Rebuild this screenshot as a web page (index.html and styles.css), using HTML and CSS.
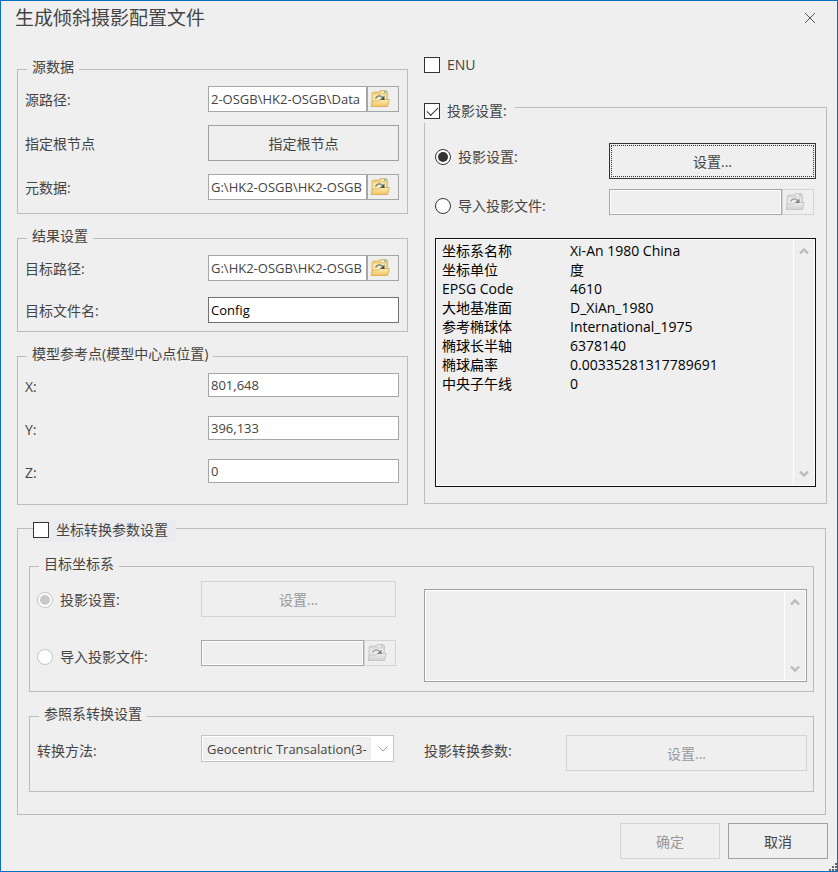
FILE: index.html
```html
<!DOCTYPE html>
<html lang="zh-CN">
<head>
<meta charset="utf-8">
<title>生成倾斜摄影配置文件</title>
<link rel="stylesheet" href="styles.css">
</head>
<body>
<svg class="defs" width="0" height="0" aria-hidden="true">
  <defs>
    <linearGradient id="folder-front" x1="0" y1="0" x2="0" y2="1">
      <stop offset="0" stop-color="#fdeeb2"/>
      <stop offset="1" stop-color="#edc364"/>
    </linearGradient>
    <symbol id="icon-folder" viewBox="0 0 20 18">
      <path d="M2 15V3.500L3 2h6l1-1.500h6.500L17.500 2v13z" fill="#efcd78" stroke="#dcb35c" stroke-width="0.800"/>
      <path d="M3 12V4.500h13V12z" fill="#fbe9ab"/>
      <path d="M11 1.500h5v1.300h-5z" fill="#f4fbff"/>
      <path d="M14 1.300h2v1.500h-2z" fill="#3fc3e8"/>
      <path d="M1 16.500L2.500 11h6.500L10.500 9.500h8.800L17.500 16.500z" fill="url(#folder-front)" stroke="#dba94a" stroke-width="0.800"/>
      <path d="M5.500 8.500C7 5.500 10.500 5 12.500 7.500" fill="none" stroke="#5d7585" stroke-width="1.300"/>
      <path d="M14.500 5.500v4.500H10z" fill="#3d5568"/>
    </symbol>
    <symbol id="icon-up" viewBox="0 0 10 8"><path d="M1 6.500L5 2.500L9 6.500" fill="none" stroke="#bbb" stroke-width="2.400"/></symbol>
    <symbol id="icon-down" viewBox="0 0 10 8"><path d="M1 1.500L5 5.500L9 1.500" fill="none" stroke="#bbb" stroke-width="2.400"/></symbol>
  </defs>
</svg>
<form class="dialog">
  <header class="titlebar">
    <h1>生成倾斜摄影配置文件</h1>
    <button type="button" class="close" aria-label="关闭"><svg width="12" height="12" viewBox="0 0 12 12"><path d="M1 1L11 11M11 1L1 11" stroke="#555" fill="none"/></svg></button>
  </header>

  <main class="content">
    <div class="columns">
      <div class="stack">
        <fieldset class="group source">
          <legend>源数据</legend>
          <div class="row">
            <label for="src">源路径:</label>
            <div class="path"><input id="src" type="text" value="2-OSGB\HK2-OSGB\Data"><button type="button" class="browse" aria-label="浏览"><svg width="20" height="18"><use href="#icon-folder"/></svg></button></div>
          </div>
          <div class="row">
            <label for="root">指定根节点</label>
            <button type="button" id="root" class="btn">指定根节点</button>
          </div>
          <div class="row">
            <label for="meta">元数据:</label>
            <div class="path"><input id="meta" type="text" value="G:\HK2-OSGB\HK2-OSGB"><button type="button" class="browse" aria-label="浏览"><svg width="20" height="18"><use href="#icon-folder"/></svg></button></div>
          </div>
        </fieldset>

        <fieldset class="group result">
          <legend>结果设置</legend>
          <div class="row">
            <label for="dest">目标路径:</label>
            <div class="path"><input id="dest" type="text" value="G:\HK2-OSGB\HK2-OSGB"><button type="button" class="browse" aria-label="浏览"><svg width="20" height="18"><use href="#icon-folder"/></svg></button></div>
          </div>
          <div class="row">
            <label for="name">目标文件名:</label>
            <input id="name" class="strong" type="text" value="Config">
          </div>
        </fieldset>

        <fieldset class="group origin">
          <legend>模型参考点(模型中心点位置)</legend>
          <div class="row"><label for="x">X:</label><input id="x" class="number" type="text" value="801,648"></div>
          <div class="row"><label for="y">Y:</label><input id="y" class="number" type="text" value="396,133"></div>
          <div class="row"><label for="z">Z:</label><input id="z" class="number" type="text" value="0"></div>
        </fieldset>
      </div>

      <div class="right">
        <label class="choice enu"><input type="checkbox">ENU</label>
        <fieldset class="group projection">
          <legend><label class="choice"><input type="checkbox" checked>投影设置:</label></legend>
          <div class="options">
            <div class="radios">
              <label class="choice"><input type="radio" name="proj" checked>投影设置:</label>
              <label class="choice"><input type="radio" name="proj">导入投影文件:</label>
            </div>
            <div class="controls">
              <button type="button" class="btn focused">设置...</button>
              <div class="path"><input type="text" aria-label="投影文件" disabled><button type="button" class="browse" aria-label="浏览" disabled><svg width="20" height="18"><use href="#icon-folder"/></svg></button></div>
            </div>
          </div>
          <div class="listbox dark">
            <table>
              <tr><th scope="row">坐标系名称</th><td>Xi-An 1980 China</td></tr>
              <tr><th scope="row">坐标单位</th><td>度</td></tr>
              <tr><th scope="row">EPSG Code</th><td>4610</td></tr>
              <tr><th scope="row">大地基准面</th><td>D_XiAn_1980</td></tr>
              <tr><th scope="row">参考椭球体</th><td>International_1975</td></tr>
              <tr><th scope="row">椭球长半轴</th><td>6378140</td></tr>
              <tr><th scope="row">椭球扁率</th><td>0.00335281317789691</td></tr>
              <tr><th scope="row">中央子午线</th><td>0</td></tr>
            </table>
            <div class="scroll"><svg width="10" height="8"><use href="#icon-up"/></svg><svg width="10" height="8"><use href="#icon-down"/></svg></div>
          </div>
        </fieldset>
      </div>
    </div>

    <fieldset class="group transform">
      <legend><label class="choice highlight"><input type="checkbox">坐标转换参数设置</label></legend>
      <fieldset class="group target">
        <legend>目标坐标系</legend>
        <div class="radios">
          <label class="choice"><input type="radio" name="target" checked disabled>投影设置:</label>
          <label class="choice"><input type="radio" name="target" disabled>导入投影文件:</label>
        </div>
        <div class="controls">
          <button type="button" class="btn" disabled>设置...</button>
          <div class="path"><input type="text" aria-label="投影文件" disabled><button type="button" class="browse" aria-label="浏览" disabled><svg width="20" height="18"><use href="#icon-folder"/></svg></button></div>
        </div>
        <div class="listbox">
          <div class="scroll"><svg width="10" height="8"><use href="#icon-up"/></svg><svg width="10" height="8"><use href="#icon-down"/></svg></div>
        </div>
      </fieldset>
      <fieldset class="group method">
        <legend>参照系转换设置</legend>
        <label for="method">转换方法:</label>
        <div class="combo">
          <select id="method" disabled><option>Geocentric Transalation(3-</option></select>
          <svg width="10" height="6" viewBox="0 0 10 6"><path d="M0.500 0.500L5 5L9.500 0.500" fill="none" stroke="#a0a0a0"/></svg>
        </div>
        <label for="params">投影转换参数:</label>
        <button type="button" id="params" class="btn" disabled>设置...</button>
      </fieldset>
    </fieldset>
  </main>

  <footer class="actions">
    <button type="submit" class="btn" disabled>确定</button>
    <button type="button" class="btn">取消</button>
  </footer>
  <svg class="grip" width="8" height="8" viewBox="0 0 8 8" aria-hidden="true"><path d="M6 0h2v2h-2zM3 3h2v2h-2zM6 3h2v2h-2zM0 6h2v2h-2zM3 6h2v2h-2zM6 6h2v2h-2z" fill="#666"/></svg>
</form>
</body>
</html>
```
FILE: styles.css
```css
* {
  box-sizing: border-box;
}

body {
  margin: 0;
  color: #444;
  background: #efefef;
  font: 14px/20px "Open Sans", "Noto Sans CJK SC", sans-serif;
}

.defs {
  position: absolute;
}

.dialog {
  position: relative;
  min-height: 100vh;
  border: 1px solid #0a70c0;
}

button,
input,
select {
  margin: 0;
  color: inherit;
  font: inherit;
  border-radius: 0;
}

svg {
  display: block;
}

.titlebar {
  display: flex;
  align-items: center;
  justify-content: space-between;
  height: 36px;
  padding: 0 21px 3px 14px;
}

.titlebar h1 {
  margin: 0;
  font-size: 19px;
  font-weight: 400;
  line-height: 28px;
}

.close {
  padding: 0;
  border: 0;
  background: none;
}

.content {
  padding: 20px 10px 0 16px;
}

.columns {
  display: grid;
  grid-template-columns: 391fr 403fr;
  gap: 16px;
}

.stack {
  display: flex;
  flex-direction: column;
  gap: 12px;
}

/* Group boxes */
.group {
  min-width: 0;
  margin: 0;
  border: 1px solid #bcbcbc;
}

.group > legend {
  margin-left: 2px;
  padding: 0 5px 4px;
}

.stack .group {
  display: flex;
  flex-direction: column;
  padding: 5px 8px 13px 7px;
}

.source {
  gap: 13px;
}

.stack .result {
  gap: 16px;
  padding-bottom: 8px;
}

.stack .origin {
  gap: 19px;
  padding-bottom: 21px;
}

.row {
  display: grid;
  grid-template-columns: 183px 1fr;
  align-items: center;
}

.row > label {
  padding-top: 2px;
}

.origin .row > label {
  padding-top: 4px;
}

/* Text fields and buttons */
input[type="text"] {
  width: 100%;
  min-width: 0;
  height: 26px;
  padding: 0 2px;
  border: 1px solid #a6a6a6;
  background: #fff;
  font-size: 13px;
}

input[type="text"]:disabled {
  background: #efefef;
  box-shadow: inset 0 0 0 1px #fff;
}

input[type="text"].strong {
  color: #000;
  border-color: #707070;
}

input[type="text"].number {
  height: 24px;
}

.path {
  display: flex;
}

.browse {
  flex: none;
  width: 32px;
  height: 26px;
  padding: 0 0 0 2px;
  border: 1px solid #a6a6a6;
  background: #efefef;
}

.browse:disabled {
  border-color: #d4d4d4;
}

.browse:disabled svg {
  filter: grayscale(1);
  opacity: 0.7;
}

.btn {
  height: 36px;
  padding: 2px 8px 0;
  border: 1px solid #a0a0a0;
  background: #efefef;
}

.btn:disabled {
  color: #999;
  border-color: #d4d4d4;
}

.btn.focused {
  border-color: #333;
  outline: 1px dotted #333;
  outline-offset: -3px;
}

/* Check boxes and radio buttons */
.choice {
  display: flex;
  align-items: center;
  gap: 7px;
}

.choice input {
  appearance: none;
  display: grid;
  flex: none;
  place-content: center;
  width: 16px;
  height: 16px;
  border: 1px solid #333;
  background: #fff;
}

.choice input[type="checkbox"]:checked::before {
  content: "";
  width: 10px;
  height: 5px;
  border: solid #333;
  border-width: 0 0 1px 1px;
  transform: translateY(-1px) rotate(-45deg);
}

.choice input[type="radio"] {
  border-radius: 50%;
}

.choice input[type="radio"]:checked::before {
  content: "";
  width: 10px;
  height: 10px;
  border-radius: 50%;
  background: #333;
}

.choice input:disabled {
  border-color: #c4c4c4;
}

.choice input[type="radio"]:disabled:checked::before {
  background: #c8c8c8;
}

.enu {
  height: 16px;
  margin-bottom: 18px;
}

.projection {
  padding: 20px 10px 16px;
}

.projection > legend {
  position: relative;
  margin-left: -11px;
  padding: 8px 8px 0 0;
  background: #efefef;
}

.projection > legend .choice {
  height: 24px;
}

.options {
  display: grid;
  grid-template-columns: 174px 1fr;
  margin-bottom: 22px;
}

.radios {
  display: flex;
  flex-direction: column;
  gap: 29px;
  padding-top: 4px;
}

.controls {
  display: flex;
  flex-direction: column;
  gap: 10px;
}

.options .path {
  padding-right: 2px;
}

/* Read-only lists */
.listbox {
  display: flex;
  justify-content: flex-end;
  border: 1px solid #a0a0a0;
  box-shadow: inset 0 0 0 1px #fff;
}

.listbox.dark {
  justify-content: space-between;
  min-height: 249px;
  color: #000;
  border-color: #111;
}

.listbox table {
  align-self: flex-start;
  margin: 2px 6px;
  border-collapse: collapse;
  line-height: 19px;
}

.listbox th,
.listbox td {
  padding: 0;
  font-weight: 400;
  text-align: left;
}

.listbox th {
  width: 128px;
}

.scroll {
  display: flex;
  flex-direction: column;
  align-items: center;
  justify-content: space-between;
  width: 22px;
  padding: 8px 2px 8px 0;
  border-left: 1px solid #fff;
}

/* Coordinate transform */
.transform {
  margin: 10px 1px 0 0;
  padding: 12px 11px 22px;
}

.transform > legend {
  margin-left: 4px;
  padding: 4px 0 0;
}

.highlight {
  height: 23px;
  padding: 0 8px 1px 0;
  background: #ebecf0;
}

.target {
  display: grid;
  grid-template-columns: 164px 195px 1fr;
  margin-bottom: 12px;
  padding: 3px 6px 9px 7px;
}

.target .radios {
  gap: 37px;
  padding-top: 9px;
}

.target .controls {
  gap: 23px;
}

.target .listbox {
  min-height: 93px;
  margin: 8px 0 0 28px;
}

.method {
  display: grid;
  grid-template-columns: 164px 193px 30px 142px 1fr;
  align-items: start;
  padding: 7px 6px 20px 7px;
}

.method > label {
  padding-top: 6px;
}

.method > label[for="params"] {
  grid-column: 4;
}

.combo {
  display: grid;
  align-items: center;
}

.combo > * {
  grid-area: 1 / 1;
}

.combo select {
  appearance: none;
  width: 100%;
  height: 27px;
  padding: 0 22px 0 5px;
  color: #444;
  font-size: 13px;
  opacity: 1;
  border: 1px solid #c4c4c4;
  background: linear-gradient(#efefef, #efefef) 1px 1px / calc(100% - 23px) calc(100% - 2px) no-repeat #fff;
}

.combo svg {
  justify-self: end;
  margin-right: 6px;
  pointer-events: none;
}

.actions {
  display: flex;
  justify-content: flex-end;
  gap: 8px;
  padding: 8px 9px 12px;
}

.actions .btn {
  width: 100px;
}

.grip {
  position: absolute;
  right: 0;
  bottom: 0;
}
```
